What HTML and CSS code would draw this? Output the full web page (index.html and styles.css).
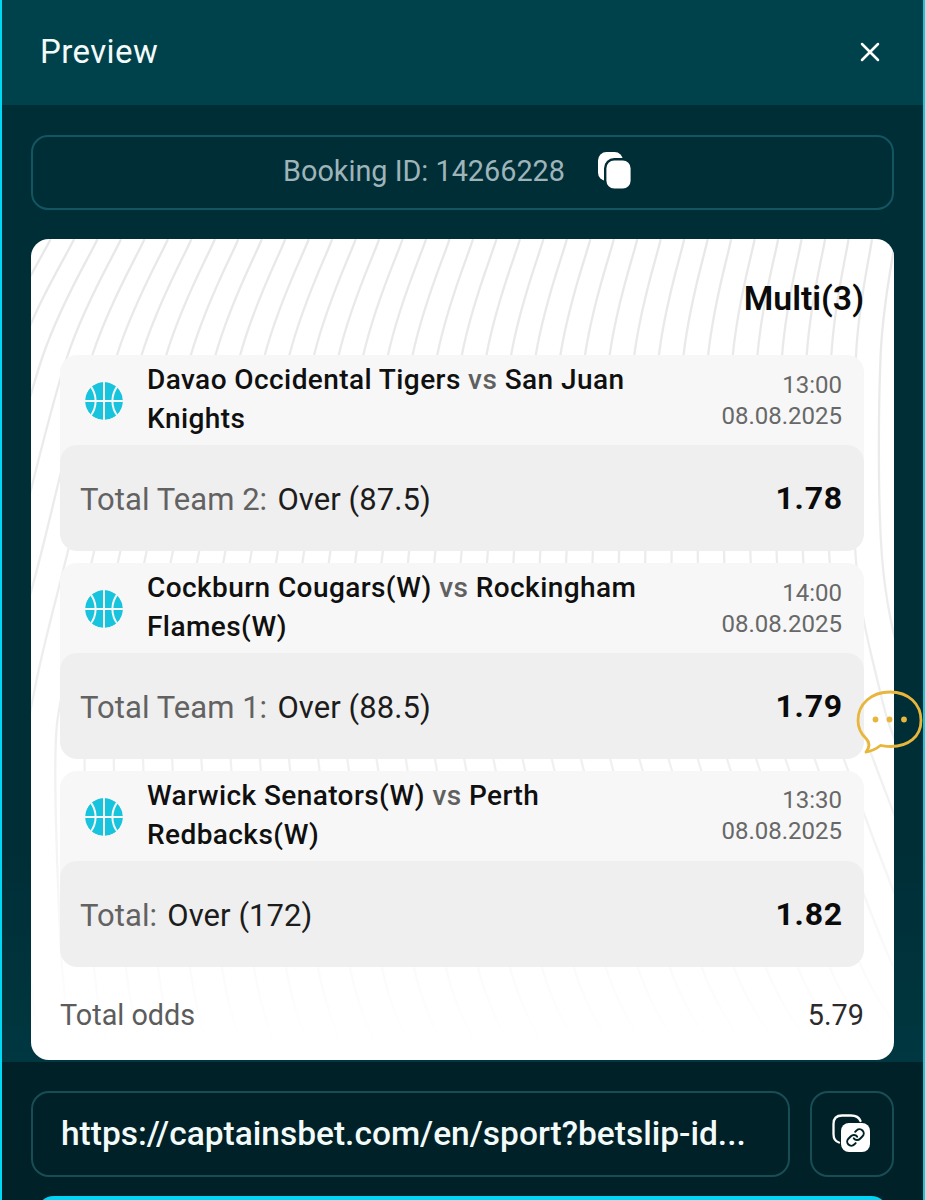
FILE: index.html
```html
<!DOCTYPE html>
<html lang="en">
<head>
<meta charset="utf-8">
<title>Preview</title>
<link rel="stylesheet" href="styles.css">
</head>
<body>
<div class="modal">
  <header class="header">
    <h1 class="title">Preview</h1>
    <svg class="close" width="20" height="20" viewBox="0 0 20 20"><path d="M2 2l16 16M18 2l-16 16"/></svg>
  </header>
  <main class="content">
    <div class="booking">
      <span class="booking-id">Booking ID: 14266228</span>
      <svg class="copy" width="36" height="40" viewBox="0 0 36 40">
        <rect x="1" y="1" width="25" height="29" rx="8.500"/>
        <rect class="copy-front" x="8.200" y="8.200" width="26.600" height="30.600" rx="9"/>
      </svg>
    </div>
    <section class="slip">
      <svg class="waves" id="waves" width="863" height="821" viewBox="31 239 863 821"></svg>
      <h2 class="slip-type">Multi(3)</h2>
      <div class="bets">
        <article class="bet">
          <div class="match">
            <svg class="ball" width="38" height="38" viewBox="0 0 38 38"><circle cx="19" cy="19" r="19"/><path d="M19 0v38M0 19h38M5 3.500c7.500 9 7.500 22 0 31M33 3.500c-7.500 9-7.500 22 0 31"/></svg>
            <p class="teams">Davao Occidental Tigers <span>vs</span> San Juan<br>Knights</p>
            <p class="date">13:00<br>08.08.2025</p>
          </div>
          <div class="pick"><p><span class="market">Total Team 2:</span> Over (87.5)</p><b class="odd">1.78</b></div>
        </article>
        <article class="bet">
          <div class="match">
            <svg class="ball" width="38" height="38" viewBox="0 0 38 38"><circle cx="19" cy="19" r="19"/><path d="M19 0v38M0 19h38M5 3.500c7.500 9 7.500 22 0 31M33 3.500c-7.500 9-7.500 22 0 31"/></svg>
            <p class="teams">Cockburn Cougars(W) <span>vs</span> Rockingham<br>Flames(W)</p>
            <p class="date">14:00<br>08.08.2025</p>
          </div>
          <div class="pick"><p><span class="market">Total Team 1:</span> Over (88.5)</p><b class="odd">1.79</b></div>
        </article>
        <article class="bet">
          <div class="match">
            <svg class="ball" width="38" height="38" viewBox="0 0 38 38"><circle cx="19" cy="19" r="19"/><path d="M19 0v38M0 19h38M5 3.500c7.500 9 7.500 22 0 31M33 3.500c-7.500 9-7.500 22 0 31"/></svg>
            <p class="teams">Warwick Senators(W) <span>vs</span> Perth<br>Redbacks(W)</p>
            <p class="date date-last">13:30<br>08.08.2025</p>
          </div>
          <div class="pick"><p><span class="market">Total:</span> Over (172)</p><b class="odd">1.82</b></div>
        </article>
      </div>
      <div class="total"><span class="total-label">Total odds</span><span class="total-value">5.79</span></div>
    </section>
  </main>
  <footer class="footer">
    <div class="share">
      <div class="link">https://captainsbet.com/en/sport?betslip-id...</div>
      <button class="copy-link" aria-label="Copy link">
        <svg width="40" height="40" viewBox="0 0 40 40">
          <path class="back" d="M8 29.500C4.500 28.500 2.500 26 2.500 21V11C2.500 5 5 2.500 11 2.500H20C25 2.500 28 4 29.500 8"/>
          <rect class="front" x="10" y="10" width="29" height="29" rx="8"/>
          <g class="chain" transform="translate(14.500 14.500) scale(.83)"><path d="M10 13a5 5 0 0 0 7.540.540l3-3a5 5 0 0 0-7.070-7.070l-1.720 1.710"/><path d="M14 11a5 5 0 0 0-7.540-.540l-3 3a5 5 0 0 0 7.070 7.070l1.710-1.710"/></g>
        </svg>
      </button>
    </div>
    <div class="primary"></div>
  </footer>
  <svg class="chat" width="68" height="66" viewBox="0 0 68 66">
    <path d="M10.500 50C5 45 2 38.500 2 31.500C2 15 15.500 3 34 3S65 15 65 31.500S52 57.500 35 57.500C31 57.500 28 57 24.500 56.500C20 60 15.500 62.500 10 63C13 59 14.500 54 10.500 50Z"/>
    <circle cx="19.500" cy="30.500" r="2.900"/><circle cx="33.500" cy="30.500" r="2.900"/><circle cx="48" cy="30.500" r="2.900"/>
  </svg>
</div>
<script src="waves.js"></script>
</body>
</html>
```
FILE: styles.css
```css
* { box-sizing: border-box; margin: 0; padding: 0; }
body { width: 925px; height: 1200px; overflow: hidden; font-family: Roboto, "Liberation Sans", sans-serif; font-weight: 400; background: #002d36; }
.modal { position: relative; height: 1200px; border-left: 2px solid #00d8f5; border-right: 2px solid #13cadb; display: flex; flex-direction: column; overflow: hidden; }
.header { height: 105px; flex: none; background: #00424b; display: flex; align-items: center; justify-content: space-between; padding: 0 43px 2px 38px; }
.title { font-size: 33px; font-weight: 400; color: #f3fafa; letter-spacing: .4px; }
.close { fill: none; stroke: #fff; stroke-width: 2.5; stroke-linecap: round; }
.content { height: 957px; flex: none; padding: 30px 29px 0; display: flex; flex-direction: column; gap: 29px; background: linear-gradient(#002e37, #002e37 78%, #003740); }
.booking { height: 75px; flex: none; border: 2px solid #135661; border-radius: 17px; display: flex; align-items: center; justify-content: center; gap: 32px; padding: 0 9px 3px 0; }
.booking-id { font-size: 28.8px; color: #9fb4b9; }
.copy { fill: #fff; }
.copy-front { stroke: #002e37; stroke-width: 2.4; }
.slip { position: relative; height: 821px; background: #fff; border-radius: 18px; overflow: hidden; padding: 0 30px 0 29px; display: flex; flex-direction: column; }
.waves { position: absolute; left: 0; top: 0; fill: none; stroke-width: 2.3; }
.slip-type, .bets, .total { position: relative; }
.slip-type { height: 116px; line-height: 119px; text-align: right; font-size: 33.8px; font-weight: 600; color: #0b0b0b; }
.bets { display: flex; flex-direction: column; gap: 12px; }
.bet { height: 196px; background: #f7f7f7; border-radius: 17px; overflow: hidden; }
.match { height: 90px; display: flex; align-items: flex-start; padding: 0 22px 0 25px; }
.ball { margin-top: 27px; fill: #18c4dd; flex: none; overflow: hidden; border-radius: 50%; }
.ball path { fill: none; stroke: #f7f7f7; stroke-width: 2; }
.teams { margin: 6px 0 0 24px; flex: 1; font-size: 28px; line-height: 38.5px; font-weight: 500; letter-spacing: .42px; color: #101010; white-space: nowrap; }
.teams span { color: #606060; }
.date { padding-top: 14.5px; text-align: right; font-size: 24px; line-height: 31px; color: #686868; }
.date-last { padding-top: 13.5px; }
.pick { height: 106px; background: #efefef; border-radius: 17px; display: flex; align-items: center; justify-content: space-between; padding: 2px 22px 0 20px; font-size: 31px; color: #1c1c1c; }
.pick p { letter-spacing: .06px; }
.market { color: #626262; margin-right: 2.5px; }
.odd { font-size: 32px; font-weight: 700; color: #0b0b0b; letter-spacing: .8px; margin: 0 -1px 2px 0; }
.total { display: flex; justify-content: space-between; height: 92px; align-items: center; padding-top: 4px; font-size: 28.8px; }
.total-label { color: #5c5c5c; }
.total-value { color: #2b2b2b; }
.footer { flex: 1; background: #002127; padding: 29px 29px 0; }
.share { display: flex; gap: 20px; height: 86px; }
.link { width: 759px; border: 2px solid #184d55; border-radius: 18px; padding-left: 28px; font-size: 33.5px; line-height: 81px; font-weight: 500; color: #f3fafa; white-space: nowrap; }
.copy-link { flex: 1; border: 2px solid #184d55; border-radius: 18px; background: none; display: flex; align-items: center; justify-content: center; }
.copy-link svg { margin: 0 2px 3px 0; }
.back, .chain { fill: none; stroke-linecap: round; }
.back { stroke: #fff; stroke-width: 2.3; }
.front { fill: #fff; }
.chain { stroke: #002127; stroke-width: 2.4; }
.primary { margin: 19px 5px 0; height: 80px; border-radius: 18px; background: #00d5f5; }
.chat { position: absolute; left: 854px; top: 689px; fill: none; stroke: #e9b63c; stroke-width: 2.8; stroke-linejoin: round; }
.chat circle { fill: #e9b63c; stroke: none; }
```
FILE: waves.js
```js
// Wavy background lines of the bet slip, each one a smooth curve through these rows.
const svg = document.getElementById('waves');
const mix = (a, b, t) => a + (b - a) * t;
svg.innerHTML = '<defs><linearGradient id="fade" gradientUnits="userSpaceOnUse" x1="0" y1="239" x2="0" y2="1045">' +
  '<stop offset="0" stop-color="#e8e8e8"/><stop offset=".6" stop-color="#eeeeee"/>' +
  '<stop offset=".8" stop-color="#f6f6f6"/><stop offset="1" stop-color="#ffffff"/></linearGradient></defs>';
for (let k = -5; k <= 36; k++) {
  const t = k / 30;
  const points = [
    [mix(168, 872, t), 239],
    [mix(117, 856, t), 355],
    [mix(66.5, 855.7, t), 557],
    [mix(36, 878, t), 683],
    [mix(26, 905, t), 766],
    [mix(30, 990, t), 968],
    [mix(41, 1050, t), 1050]
  ];
  let d = `M${points[0][0]} ${points[0][1]}`;
  for (let i = 1; i < points.length; i++) {
    const p = points[i - 1], q = points[i];
    const before = points[i - 2] || p, after = points[i + 1] || q;
    d += `C${p[0] + (q[0] - before[0]) / 6} ${p[1] + (q[1] - before[1]) / 6} ${q[0] - (after[0] - p[0]) / 6} ${q[1] - (after[1] - p[1]) / 6} ${q[0]} ${q[1]}`;
  }
  const path = document.createElementNS('http://www.w3.org/2000/svg', 'path');
  path.setAttribute('d', d);
  path.setAttribute('stroke', 'url(#fade)');
  svg.append(path);
}
```
